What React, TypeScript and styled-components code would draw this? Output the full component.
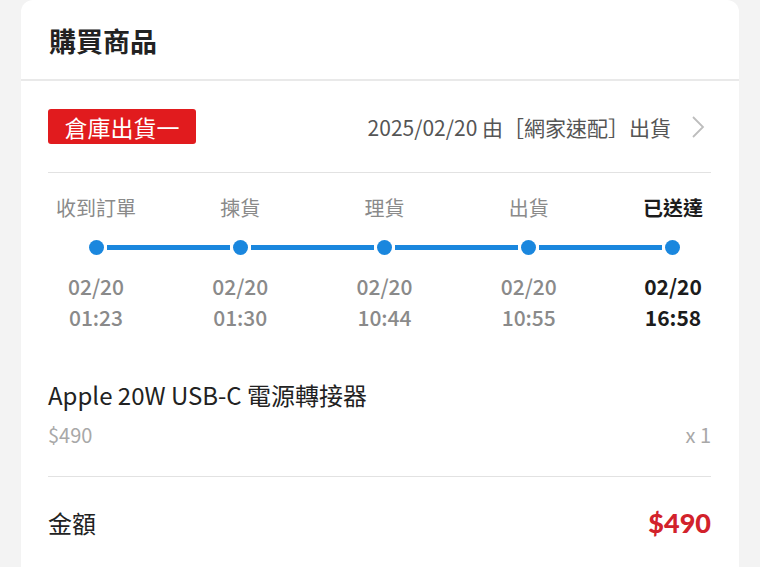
import styled, { createGlobalStyle } from "styled-components";

const GlobalStyle = createGlobalStyle`
  html, body {
    margin: 0;
    padding: 0;
    background: #f3f3f3;
  }
  body {
    font-family: "Noto Sans CJK TC", "Noto Sans", sans-serif;
    color: #222;
  }
`;

type Step = {
  name: string;
  date: string;
  time: string;
};

const steps: Step[] = [
  { name: "收到訂單", date: "02/20", time: "01:23" },
  { name: "揀貨", date: "02/20", time: "01:30" },
  { name: "理貨", date: "02/20", time: "10:44" },
  { name: "出貨", date: "02/20", time: "10:55" },
  { name: "已送達", date: "02/20", time: "16:58" },
];

const Page = styled.div`
  padding: 0 21px;
  height: 567px;
  overflow: hidden;
`;

const Card = styled.div`
  background: #fff;
  border-radius: 12px 12px 0 0;
  height: 600px;
`;

const Header = styled.div`
  height: 79px;
  display: flex;
  align-items: center;
  padding: 0 28px;
  border-bottom: 2px solid #e9e9e9;
  h2 {
    margin: 0;
    font-size: 27px;
    font-weight: 700;
    color: #222;
    padding-top: 2px;
  }
`;

const Body = styled.div`
  padding: 0 28px 0 27px;
`;

const ShipRow = styled.div`
  display: flex;
  align-items: center;
  justify-content: space-between;
  padding: 28px 0 28px;
  border-bottom: 1.5px solid #e2e2e2;
`;

const Badge = styled.div`
  background: #e11b1e;
  color: #fff;
  width: 148px;
  height: 35px;
  border-radius: 3px;
  display: flex;
  align-items: center;
  justify-content: center;
  font-size: 23px;
`;

const ShipInfo = styled.div`
  display: flex;
  align-items: center;
  gap: 20px;
  font-size: 21px;
  color: #555;
  margin-right: 6px;
`;

const Timeline = styled.div`
  margin-right: -10px;
  padding: 22px 0 0;
`;

const Row = styled.div`
  display: grid;
  grid-template-columns: repeat(5, 96px);
  justify-content: space-between;
`;

const Label = styled.div<{ $active?: boolean }>`
  text-align: center;
  font-size: 20px;
  line-height: 26px;
  white-space: nowrap;
  color: ${({ $active }) => ($active ? "#1c1c1c" : "#8a8a8a")};
  font-weight: ${({ $active }) => ($active ? 700 : 400)};
`;

const Track = styled.div`
  display: flex;
  align-items: center;
  padding: 0 41px;
  margin-top: 19px;
`;

const Dot = styled.div`
  width: 15px;
  height: 15px;
  border-radius: 50%;
  background: #1a87de;
  flex: none;
`;

const Segment = styled.div`
  flex: 1;
  height: 5px;
  background: #1a87de;
  margin: 0 3px;
`;

const Stamp = styled.div<{ $active?: boolean }>`
  text-align: center;
  font-size: 21px;
  line-height: 31px;
  font-weight: ${({ $active }) => ($active ? 700 : 500)};
  color: ${({ $active }) => ($active ? "#1c1c1c" : "#8a8a8a")};
`;

const Dates = styled(Row)`
  margin-top: 16px;
`;

const Product = styled.div`
  padding: 47px 0 28px;
  border-bottom: 1.5px solid #e2e2e2;
`;

const ProductName = styled.div`
  font-size: 24px;
  line-height: 30px;
  color: #222;
`;

const PriceRow = styled.div`
  display: flex;
  justify-content: space-between;
  margin-top: 12px;
  font-size: 20px;
  line-height: 26px;
  color: #a8a8a8;
`;

const TotalRow = styled.div`
  display: flex;
  justify-content: space-between;
  align-items: center;
  margin-top: 31px;
  line-height: 30px;
  span {
    font-size: 24px;
    color: #222;
  }
  strong {
    font-family: "Lato", "DejaVu Sans", sans-serif;
    font-size: 27px;
    font-weight: 900;
    color: #d2222b;
  }
`;

const Chevron = () => (
  <svg width="14" height="24" viewBox="0 0 14 24" fill="none">
    <path d="M2 2 L12 12 L2 22" stroke="#bdbdbd" strokeWidth="1.8" />
  </svg>
);

const App = () => {
  const last = steps.length - 1;
  return (
    <Page>
      <GlobalStyle />
      <Card>
        <Header>
          <h2>購買商品</h2>
        </Header>
        <Body>
          <ShipRow>
            <Badge>倉庫出貨一</Badge>
            <ShipInfo>
              <span>2025/02/20 由［網家速配］出貨</span>
              <Chevron />
            </ShipInfo>
          </ShipRow>
          <Timeline>
            <Row>
              {steps.map((s, i) => (
                <Label key={s.name} $active={i === last}>
                  {s.name}
                </Label>
              ))}
            </Row>
            <Track>
              {steps.map((s, i) => (
                <>
                  <Dot key={s.name + "dot"} />
                  {i < last && <Segment key={s.name + "seg"} />}
                </>
              ))}
            </Track>
            <Dates>
              {steps.map((s, i) => (
                <Stamp key={s.name} $active={i === last}>
                  {s.date}
                  <br />
                  {s.time}
                </Stamp>
              ))}
            </Dates>
          </Timeline>
          <Product>
            <ProductName>Apple 20W USB-C 電源轉接器</ProductName>
            <PriceRow>
              <span>$490</span>
              <span>x 1</span>
            </PriceRow>
          </Product>
          <TotalRow>
            <span>金額</span>
            <strong>$490</strong>
          </TotalRow>
        </Body>
      </Card>
    </Page>
  );
};

export default App;
